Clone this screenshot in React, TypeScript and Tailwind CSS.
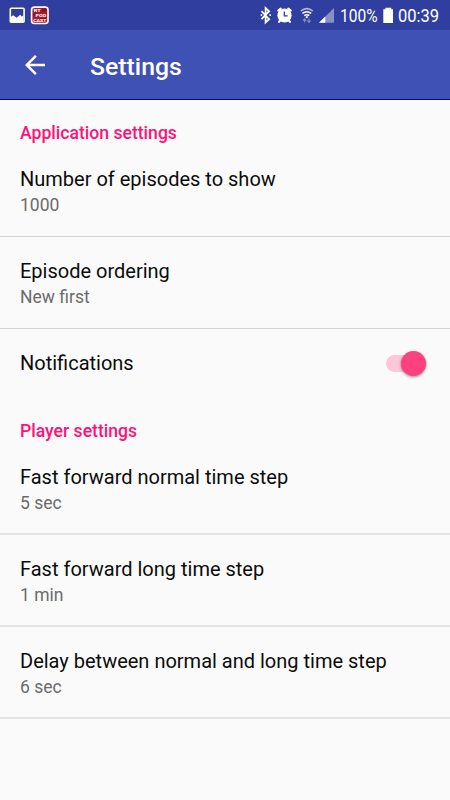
import React from "react";

function StatusBar() {
  return (
    <div className="flex h-[30px] items-center bg-[#303f9f] text-white">
      <svg className="h-[30px] w-[60px] shrink-0" viewBox="0 0 60 30">
        <rect x="10.3" y="8.3" width="13.8" height="14" rx="1" fill="none" stroke="#fff" strokeWidth="1.6" />
        <path d="M11 16.8l2.2-1.6 3.4 2.6 3.6-3 1.6 1.6 1.6-1.2v3.6H11z" fill="#fff" />
        <path d="M11 18h12.4v4H11z" fill="#fff" />
        <rect x="30.8" y="6.3" width="18" height="18" rx="3.5" fill="#fff" />
        <rect x="32.4" y="7.9" width="14.8" height="14.8" rx="2" fill="#a51d2b" />
        <path d="M33 13.5h3v2h-3zM42 8.5h4.5v3H42zM41 18.5h5v1.2h-5z" fill="#8a0f1e" />
        <g fill="#fff" fontFamily="Roboto, sans-serif" fontWeight="700" fontSize="3.8">
          <text x="33.8" y="12.1" textLength="7" lengthAdjust="spacingAndGlyphs">RT</text>
          <text x="35.6" y="16.8" textLength="10.6" lengthAdjust="spacingAndGlyphs">POD</text>
          <text x="33.2" y="21.5" textLength="13.2" lengthAdjust="spacingAndGlyphs">CAST</text>
        </g>
      </svg>
      <div className="grow" />
      <svg className="h-[30px] w-[80px] shrink-0" viewBox="258 0 80 30">
        <path d="M261.5 11.2l7.6 8-3.5 3.2V8l3.5 3.2-7.6 8" fill="none" stroke="#fff" strokeWidth="1.8" />
        <path d="M261.4 14.2v1.8M270.2 14.2v1.8" stroke="#fff" strokeWidth="1.5" />
        <path d="M278.3 10.6l2.4-2M290.7 10.6l-2.4-2M280.3 20.4l-1.2 1.4M288.7 20.4l1.2 1.4" stroke="#fff" strokeWidth="2.2" strokeLinecap="round" />
        <circle cx="284.5" cy="15.5" r="7.1" fill="#fff" />
        <path d="M284.3 11.5v4.3h3.4" fill="none" stroke="#303f9f" strokeWidth="1.3" />
        <path d="M300.8 11q6-4.8 12 0" fill="none" stroke="#b5bbdd" strokeWidth="1.6" />
        <path d="M302.4 13.4q4.4-3.4 8.8 0M304.3 15.7q2.5-1.8 5 0" fill="none" stroke="#fff" strokeWidth="1.6" />
        <circle cx="306.8" cy="17.2" r="1.1" fill="#fff" />
        <path d="M304.6 22.6v-3.4m-1.6 1.5l1.6-1.8 1.6 1.8M309 18.6v3.6m-1.6-1.7l1.6 1.8 1.6-1.8" fill="none" stroke="#8791c7" strokeWidth="1.1" />
        <path d="M319 22.8L334 8v14.8z" fill="#8791c7" />
        <path d="M319 22.8l6.3-6.2v6.2z" fill="#fff" />
      </svg>
      <div className="w-[45px] shrink-0 pl-[2px]">
        <span className="inline-block origin-left translate-y-px scale-x-[0.817] text-[19px] leading-[30px]">100%</span>
      </div>
      <svg className="h-[30px] w-[14px] shrink-0" viewBox="0 0 14 30">
        <path d="M2.4 9.3V7.7h5.8v1.6h1.8v13.8H.3V9.3z" fill="#fff" />
      </svg>
      <div className="w-[53px] shrink-0 pl-[0.5px]">
        <span className="inline-block origin-left translate-y-px scale-x-[0.87] text-[19px] leading-[30px]">00:39</span>
      </div>
    </div>
  );
}

function Toolbar() {
  return (
    <header className="flex h-[70px] items-center border-b border-[#000a8b] bg-[#3f51b5] text-white">
      <svg className="ml-[20px] h-[30px] w-[30px]" viewBox="0 0 24 24" fill="currentColor">
        <path d="M20 11H7.83l5.59-5.59L12 4l-8 8 8 8 1.41-1.41L7.83 13H20z" />
      </svg>
      <h1 className="ml-[40px] pt-[5px] text-[24.8px] font-medium leading-[30px]">Settings</h1>
    </header>
  );
}

function Category({ children }: { children: React.ReactNode }) {
  return (
    <h2 className="h-[45px] pl-5 pt-[21px] text-[17.6px] font-medium leading-[24px] text-[#ff1178]">{children}</h2>
  );
}

function Preference({ title, summary, soft = false }: { title: string; summary: string; soft?: boolean }) {
  return (
    <div className={"h-[92px] pl-5 pt-[21px] " + (soft ? "border-b-2 border-[#e3e3e3]" : "border-b border-[#d2d2d2]")}>
      <div className="text-[20px] leading-[26px] text-[#0c0c0c]">{title}</div>
      <div className="pt-px text-[17.5px] leading-[24px] text-[#6b6b6b]">{summary}</div>
    </div>
  );
}

function Switch() {
  return (
    <div className="flex h-[17px] w-[40px] items-center justify-end rounded-full bg-[#fdc6d9]">
      <div className="h-[25px] w-[25px] shrink-0 rounded-full bg-[#ff4081] shadow-[0_1px_3px_rgba(0,0,0,0.45)]" />
    </div>
  );
}

export default function App() {
  return (
    <div className="flex h-[800px] w-[450px] flex-col overflow-hidden bg-[#fafafa] font-[Roboto,sans-serif]">
      <StatusBar />
      <Toolbar />
      <main>
        <section>
          <Category>Application settings</Category>
          <Preference title="Number of episodes to show" summary="1000" />
          <Preference title="Episode ordering" summary="New first" />
          <div className="flex h-[68px] items-center justify-between pl-5 pr-6">
            <span className="text-[20px] leading-[26px] text-[#0c0c0c]">Notifications</span>
            <Switch />
          </div>
        </section>
        <section className="pt-px">
          <Category>Player settings</Category>
          <Preference title="Fast forward normal time step" summary="5 sec" soft />
          <Preference title="Fast forward long time step" summary="1 min" soft />
          <Preference title="Delay between normal and long time step" summary="6 sec" soft />
        </section>
      </main>
    </div>
  );
}
